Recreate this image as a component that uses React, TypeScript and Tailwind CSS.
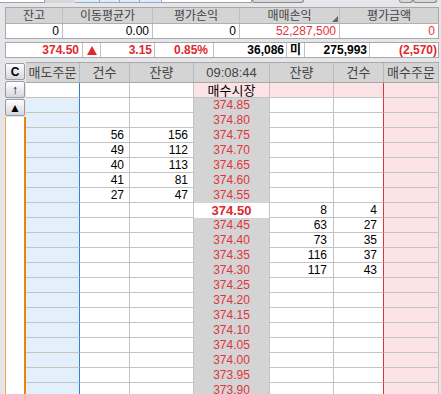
const asks: Record<string, [string, string]> = {
  '374.75': ['56', '156'],
  '374.70': ['49', '112'],
  '374.65': ['40', '113'],
  '374.60': ['41', '81'],
  '374.55': ['27', '47'],
}

const bids: Record<string, [string, string]> = {
  '374.50': ['8', '4'],
  '374.45': ['63', '27'],
  '374.40': ['73', '35'],
  '374.35': ['116', '37'],
  '374.30': ['117', '43'],
}

const prices = [
  '374.85', '374.80', '374.75', '374.70', '374.65', '374.60', '374.55', '374.50',
  '374.45', '374.40', '374.35', '374.30', '374.25', '374.20', '374.15', '374.10',
  '374.05', '374.00', '373.95', '373.90',
]

function SideButton({ label }: { label: string }) {
  return (
    <div className="w-[20px] h-[17px] flex items-center justify-center border border-[#9a9aa2] rounded-[2px] bg-gradient-to-b from-white to-[#d6d6de] text-[12px] font-bold text-black leading-none">
      {label}
    </div>
  )
}

function MarketRow() {
  return (
    <div className="flex h-[15px]">
      <div className="w-[54px] border-b border-r border-b-[#c4c4c4] border-r-[#2f7fdc] bg-white" />
      <div className="w-[50px] border-b border-r border-[#c4c4c4] bg-white" />
      <div className="w-[64px] border-b border-r border-[#c4c4c4] bg-white" />
      <div className="w-[76px] border-r border-b border-[#c4c4c4] bg-[#fce4e6] flex items-center justify-center text-[13px] text-black leading-none">
        매수시장
      </div>
      <div className="w-[64px] border-b border-r border-[#c4c4c4] bg-[#fce4e6]" />
      <div className="w-[50px] border-b border-r border-b-[#c4c4c4] border-r-[#e0343c] bg-[#fce4e6]" />
      <div className="w-[55px] border-b border-r border-[#c4c4c4] bg-[#fce4e6]" />
    </div>
  )
}

function PriceRow({ price }: { price: string }) {
  const ask = asks[price]
  const bid = bids[price]
  const current = price === '374.50'
  return (
    <div className="flex h-[15px] text-[12px] leading-[14px]">
      <div className="w-[54px] border-b border-r border-b-[#c4c4c4] border-r-[#2f7fdc] bg-[#e3effb]" />
      <div className="w-[50px] border-b border-r border-[#c4c4c4] bg-white text-right pr-[5px]">{ask ? ask[0] : ''}</div>
      <div className="w-[64px] border-b border-r border-[#c4c4c4] bg-white text-right pr-[5px]">{ask ? ask[1] : ''}</div>
      <div
        className={
          current
            ? 'w-[76px] border-r border-[#c4c4c4] bg-white text-center text-[#e0282e] font-bold text-[13px] leading-[15px]'
            : 'w-[76px] border-r border-[#c4c4c4] bg-[#d4d4d4] text-center text-[#e0343c] leading-[15px]'
        }
      >
        {price}
      </div>
      <div className="w-[64px] border-b border-r border-[#c4c4c4] bg-white text-right pr-[6px]">{bid ? bid[0] : ''}</div>
      <div className="w-[50px] border-b border-r border-b-[#c4c4c4] border-r-[#e0343c] bg-white text-right pr-[6px]">{bid ? bid[1] : ''}</div>
      <div className="w-[55px] border-b border-r border-[#c4c4c4] bg-[#fce4e6]" />
    </div>
  )
}

export default function App() {
  return (
    <div className="w-[441px] h-[394px] overflow-hidden bg-[#e6e6ea] text-black [font-family:'Liberation_Sans','Noto_Sans_CJK_KR',sans-serif]">
      {/* sliver of the toolbar above */}
      <div className="flex h-[3px]">
        <div className="w-[45px] bg-white border-b border-r border-[#a0a0a0]" />
        <div className="w-[30px] bg-[#d8d8d8]" />
        <div className="w-[25px] bg-[#dcecfa] border-r border-b border-[#9ab]" />
        <div className="w-[20px] bg-[#dcecfa] border-r border-b border-[#9ab]" />
        <div className="w-[20px] bg-[#dcecfa] border-r border-b border-[#9ab]" />
        <div className="w-[22px] bg-[#dcecfa] border-r border-b border-[#9ab]" />
        <div className="w-[90px] bg-white border-b border-r border-[#a0a0a0]" />
        <div className="w-[52px] bg-[#d8d8dc] border-b border-x border-[#8a8a8a] rounded-b-[3px]" />
        <div className="w-[95px] bg-[#e6e6ea]" />
        <div className="w-[14px] bg-[#d8d8dc] border-b border-x border-[#8a8a8a] rounded-b-[3px]" />
        <div className="w-[24px] bg-[#d8d8dc] border-b border-x border-[#8a8a8a] rounded-b-[3px]" />
      </div>

      {/* balance table */}
      <div className="ml-[5px] mt-[4px] w-[434px] border border-[#a8a8a8] bg-white">
        <div className="flex h-[16px] bg-[#d4d4d4] border-b border-[#b0b0b0] text-[12px] text-[#444] leading-none">
          <div className="w-[57px] border-r border-[#c0c0c0] flex items-center justify-center">잔고</div>
          <div className="w-[90px] border-r border-[#c0c0c0] flex items-center justify-center">이동평균가</div>
          <div className="w-[87px] border-r border-[#c0c0c0] flex items-center justify-center">평가손익</div>
          <div className="relative w-[100px] border-r border-[#c0c0c0] flex items-center justify-center">
            매매손익
            <svg className="absolute right-[1px] bottom-[1px]" width="6" height="6" viewBox="0 0 6 6">
              <path d="M6 0 L6 6 L0 6 Z" fill="#666" />
            </svg>
          </div>
          <div className="w-[98px] flex items-center justify-center">평가금액</div>
        </div>
        <div className="flex h-[14px] text-[12px] leading-[14px]">
          <div className="w-[57px] border-r border-[#c0c0c0] text-right pr-[3px]">0</div>
          <div className="w-[90px] border-r border-[#c0c0c0] text-right pr-[3px]">0.00</div>
          <div className="w-[87px] border-r border-[#c0c0c0] text-right pr-[3px]">0</div>
          <div className="w-[100px] border-r border-[#c0c0c0] text-right pr-[3px] text-[#e0343c]">52,287,500</div>
          <div className="w-[98px] text-right pr-[3px] text-[#e0343c]">0</div>
        </div>
      </div>

      {/* current price strip */}
      <div className="ml-[5px] mt-[3px] w-[434px] border border-[#a8a8a8] bg-white flex h-[16px] text-[12px] font-bold leading-[14px]">
        <div className="w-[77px] border-r border-[#c0c0c0] text-right pr-[3px] text-[#e0282e]">374.50</div>
        <div className="w-[18px] border-r border-[#c0c0c0] flex items-center justify-center">
          <svg width="10" height="9" viewBox="0 0 10 9">
            <path d="M5 0 L10 9 L0 9 Z" fill="#e0282e" />
          </svg>
        </div>
        <div className="w-[54px] border-r border-[#c0c0c0] text-right pr-[2px] text-[#e0282e]">3.15</div>
        <div className="w-[59px] border-r border-[#c0c0c0] text-right pr-[5px] text-[#e0282e]">0.85%</div>
        <div className="w-[73px] border-r border-[#c0c0c0] text-right pr-[2px]">36,086</div>
        <div className="w-[18px] border-r border-[#c0c0c0] text-center">미</div>
        <div className="w-[65px] border-r border-[#c0c0c0] text-right pr-[2px]">275,993</div>
        <div className="w-[68px] text-right pr-[1px] text-[#e0282e]">(2,570)</div>
      </div>

      {/* order book */}
      <div className="flex mt-[4px] ml-[5px]">
        <div className="w-[21px] flex flex-col gap-[1px] pt-[1px]">
          <SideButton label="C" />
          <SideButton label="↑" />
          <SideButton label="▲" />
          <div className="h-[300px] bg-white border-l border-l-[#f0a848] border-r-2 border-r-[#e8860c]" />
        </div>
        <div className="w-[413px]">
          <div className="flex h-[21px] bg-[#d4d4d4] border-y border-[#a8a8a8] text-[13px] text-[#444] leading-none">
            <div className="w-[54px] border-r border-[#b8b8b8] flex items-center justify-center">매도주문</div>
            <div className="w-[50px] border-r border-[#b8b8b8] flex items-center justify-center">건수</div>
            <div className="w-[64px] border-r border-[#b8b8b8] flex items-center justify-center">잔량</div>
            <div className="w-[76px] border-r border-[#b8b8b8] flex items-center justify-center">09:08:44</div>
            <div className="w-[64px] border-r border-[#b8b8b8] flex items-center justify-center">잔량</div>
            <div className="w-[50px] border-r border-[#b8b8b8] flex items-center justify-center">건수</div>
            <div className="w-[55px] border-r border-[#b8b8b8] flex items-center justify-center">매수주문</div>
          </div>
          <MarketRow />
          {prices.map((p) => (
            <PriceRow key={p} price={p} />
          ))}
        </div>
      </div>
    </div>
  )
}
